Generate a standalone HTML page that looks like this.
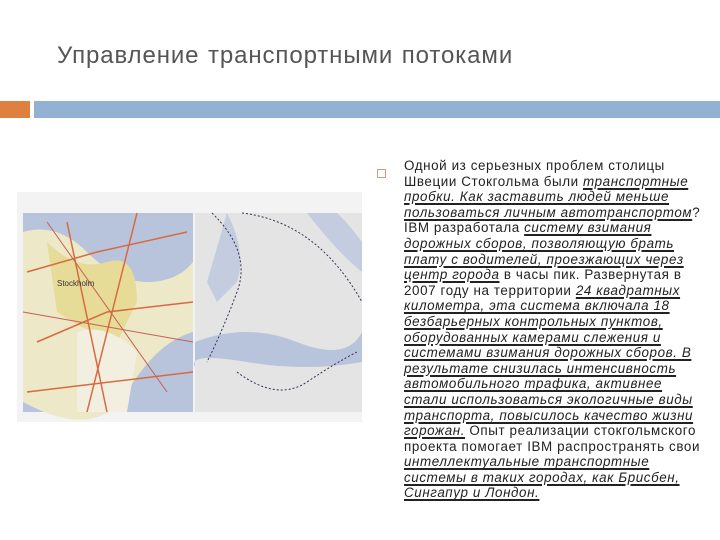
<!DOCTYPE html>
<html><head><meta charset="utf-8"><style>
body{margin:0;width:720px;height:540px;background:#fff;position:relative;overflow:hidden;font-family:"Liberation Sans","DejaVu Sans",sans-serif}
.t{position:absolute;left:57px;top:42px;font-size:24px;color:#555;letter-spacing:0.9px;word-spacing:1px}
.o{position:absolute;left:0;top:101px;width:30px;height:17px;background:#dd8040}
.b{position:absolute;left:34px;top:101px;width:686px;height:17px;background:#93b1d3}
.bul{position:absolute;left:377px;top:169px;width:7px;height:7px;border:1px solid #c9a080}
.tx{position:absolute;left:404px;top:158px;font-size:13.4px;line-height:15.6px;color:#222;white-space:nowrap;letter-spacing:0.6px}
.tx i{text-decoration:underline;text-decoration-thickness:2px;text-underline-offset:2px}
</style></head><body>
<div class="t">Управление транспортными потоками</div>
<div class="o"></div><div class="b"></div>
<svg style="position:absolute;left:17px;top:192px" width="345" height="230">
<rect width="345" height="230" fill="#f3f3f3"/>
<rect x="6" y="21" width="170" height="199" fill="#b8c4dc"/>
<path d="M6 40 Q40 30 70 60 T130 90 T176 70 V140 Q140 150 110 200 T6 210Z" fill="#ece8c8"/>
<path d="M30 50 Q60 80 90 70 T120 110 L100 150 Q70 140 40 120Z" fill="#e6dc98"/>
<path d="M60 140 Q90 130 120 160 L110 220 L60 220Z" fill="#f2efe0"/>
<path d="M10 80 L80 60 L170 40 M20 150 L90 120 L176 110 M50 30 L90 220 M120 21 L70 220 M10 200 L176 180" stroke="#d86a40" stroke-width="1.5" fill="none"/>
<path d="M30 30 L150 200 M6 120 L176 150" stroke="#c86050" stroke-width="1" fill="none"/>
<rect x="178" y="21" width="167" height="199" fill="#e4e4e4"/>
<path d="M178 150 Q230 130 280 150 T345 140 V170 Q290 180 230 170 T178 175Z" fill="#b8c4dc"/>
<path d="M210 21 Q230 60 220 90 L200 110 L190 90Z" fill="#c4cce0"/>
<path d="M290 21 Q320 60 345 80 V50 Q330 30 320 21Z" fill="#c4cce0"/>
<path d="M195 21 Q235 60 220 100 T190 170 M220 180 Q260 210 290 190 T340 160 M225 21 Q300 30 345 110" stroke="#335" stroke-width="1" stroke-dasharray="2 2" fill="none"/>
<text x="40" y="94" font-size="8" fill="#333">Stockholm</text>
</svg>
<div class="bul"></div>
<div class="tx">Одной из серьезных проблем столицы<br>Швеции Стокгольма были <i>транспортные</i><br><i>пробки. Как заставить людей меньше</i><br><i>пользоваться личным автотранспортом</i>?<br>IBM разработала <i>систему взимания</i><br><i>дорожных сборов, позволяющую брать</i><br><i>плату с водителей, проезжающих через</i><br><i>центр города</i> в часы пик. Развернутая в<br>2007 году на территории <i>24 квадратных</i><br><i>километра, эта система включала 18</i><br><i>безбарьерных контрольных пунктов,</i><br><i>оборудованных камерами слежения и</i><br><i>системами взимания дорожных сборов. В</i><br><i>результате снизилась интенсивность</i><br><i>автомобильного трафика, активнее</i><br><i>стали использоваться экологичные виды</i><br><i>транспорта, повысилось качество жизни</i><br><i>горожан.</i> Опыт реализации стокгольмского<br>проекта помогает IBM распространять свои<br><i>интеллектуальные транспортные</i><br><i>системы в таких городах, как Брисбен,</i><br><i>Сингапур и Лондон.</i></div>
</body></html>
